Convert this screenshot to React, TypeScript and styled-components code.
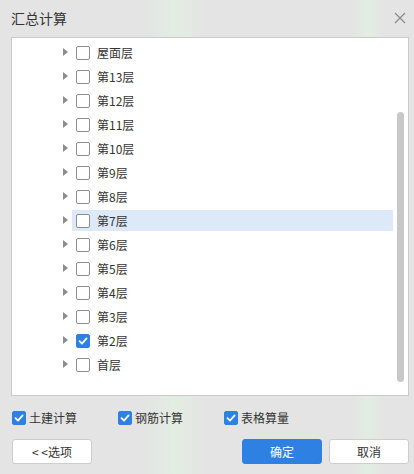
import styled, { createGlobalStyle } from "styled-components";

const floors = [
    "屋面层",
    "第13层",
    "第12层",
    "第11层",
    "第10层",
    "第9层",
    "第8层",
    "第7层",
    "第6层",
    "第5层",
    "第4层",
    "第3层",
    "第2层",
    "首层",
];

const options = ["土建计算", "钢筋计算", "表格算量"];

const GlobalStyle = createGlobalStyle`
    html, body {
        margin: 0;
        padding: 0;
    }
    body {
        font-family: "Microsoft YaHei", "Noto Sans CJK SC", "Noto Sans", sans-serif;
        color: #333;
    }
`;

const Check = () => (
    <svg width="10" height="10" viewBox="0 0 10 10">
        <path d="M1.5 5.2 L4 7.6 L8.6 2.4" fill="none" stroke="#fff" strokeWidth="1.8" strokeLinecap="round" strokeLinejoin="round" />
    </svg>
);

export default function App() {
    return (
        <>
            <GlobalStyle />
            <Dialog>
                <Header>
                    <Title>汇总计算</Title>
                    <Close>
                        <svg width="12" height="12" viewBox="0 0 12 12">
                            <path d="M1 1 L11 11 M11 1 L1 11" stroke="#8a8a8a" strokeWidth="1.2" />
                        </svg>
                    </Close>
                </Header>
                <TreePanel>
                    <TreeList>
                        {floors.map((name) => (
                            <TreeRow key={name}>
                                <Caret />
                                <Node $active={name === "第7层"}>
                                    <Box $checked={name === "第2层"}>{name === "第2层" && <Check />}</Box>
                                    <NodeLabel>{name}</NodeLabel>
                                </Node>
                            </TreeRow>
                        ))}
                    </TreeList>
                    <ScrollTrack>
                        <ScrollThumb />
                    </ScrollTrack>
                </TreePanel>
                <Options>
                    {options.map((o) => (
                        <Option key={o}>
                            <Box $checked>
                                <Check />
                            </Box>
                            <OptionLabel>{o}</OptionLabel>
                        </Option>
                    ))}
                </Options>
                <Footer>
                    <Button>&lt; &lt;选项</Button>
                    <Spacer />
                    <Button $primary>确定</Button>
                    <Button>取消</Button>
                </Footer>
            </Dialog>
        </>
    );
}

const Dialog = styled.div`
    width: 414px;
    height: 474px;
    box-sizing: border-box;
    display: flex;
    flex-direction: column;
    background:
        linear-gradient(90deg,
            rgba(225, 245, 225, 0) 145px,
            rgba(225, 245, 225, 0.55) 175px,
            rgba(225, 245, 225, 0) 205px,
            rgba(225, 245, 225, 0) 352px,
            rgba(225, 245, 225, 0.55) 368px,
            rgba(225, 245, 225, 0) 384px),
        #e4e4e4;
    overflow: hidden;
`;

const Header = styled.div`
    height: 36px;
    display: flex;
    align-items: center;
    justify-content: space-between;
    padding: 0 6px 1px 11px;
    box-sizing: border-box;
`;

const Title = styled.div`
    font-size: 14px;
    line-height: 20px;
    color: #333;
`;

const Close = styled.div`
    width: 16px;
    height: 16px;
    display: flex;
    align-items: center;
    justify-content: center;
`;

const TreePanel = styled.div`
    margin: 1px 5px 0 11px;
    height: 359px;
    box-sizing: border-box;
    border: 1px solid #cacaca;
    background: #fff;
    display: flex;
`;

const TreeList = styled.div`
    flex: 1;
    padding-top: 2px;
    display: flex;
    flex-direction: column;
`;

const TreeRow = styled.div`
    height: 24px;
    display: flex;
    align-items: center;
    padding-left: 51px;
`;

const Caret = styled.span`
    width: 0;
    height: 0;
    border-top: 4px solid transparent;
    border-bottom: 4px solid transparent;
    border-left: 5px solid #8c8c8c;
    margin-right: 4px;
`;

const Node = styled.div<{ $active?: boolean }>`
    flex: 1;
    height: 21px;
    margin-top: 1px;
    display: flex;
    align-items: center;
    padding-left: 4px;
    background: ${(p) => (p.$active ? "#dde8f8" : "transparent")};
`;

const Box = styled.span<{ $checked?: boolean }>`
    width: 14px;
    height: 14px;
    box-sizing: border-box;
    border-radius: 2px;
    border: 1px solid ${(p) => (p.$checked ? "#2f80e3" : "#8e8e8e")};
    background: ${(p) => (p.$checked ? "#2f80e3" : "#fff")};
    display: flex;
    align-items: center;
    justify-content: center;
    flex-shrink: 0;
`;

const NodeLabel = styled.span`
    margin-left: 7px;
    font-size: 12px;
    line-height: 16px;
    color: #333;
`;

const ScrollTrack = styled.div`
    width: 15px;
    display: flex;
    justify-content: center;
    padding-top: 74px;
    box-sizing: border-box;
`;

const ScrollThumb = styled.div`
    width: 7px;
    height: 270px;
    border-radius: 4px;
    background: #c8c8c8;
`;

const Options = styled.div`
    display: flex;
    padding: 15px 0 0 12px;
    height: 14px;
    box-sizing: content-box;
`;

const Option = styled.label`
    width: 106px;
    display: flex;
    align-items: center;
`;

const OptionLabel = styled.span`
    margin-left: 3px;
    font-size: 12px;
    line-height: 16px;
    color: #333;
`;

const Footer = styled.div`
    display: flex;
    gap: 7px;
    padding: 14px 5px 0 12px;
`;

const Spacer = styled.div`
    flex: 1;
`;

const Button = styled.button<{ $primary?: boolean }>`
    width: 80px;
    height: 25px;
    box-sizing: border-box;
    border-radius: 3px;
    border: 1px solid ${(p) => (p.$primary ? "#2e80e2" : "#cdcdcd")};
    background: ${(p) => (p.$primary ? "#2e80e2" : "#fff")};
    color: ${(p) => (p.$primary ? "#fff" : "#333")};
    font-family: inherit;
    font-size: 12px;
    line-height: 16px;
    padding: 0;
    cursor: pointer;
`;
